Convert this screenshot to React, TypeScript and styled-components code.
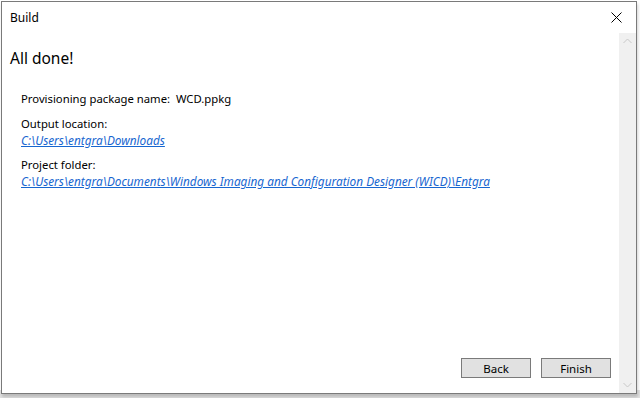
import React from "react";
import styled, { createGlobalStyle } from "styled-components";

const Global = createGlobalStyle`
  html, body {
    margin: 0;
    padding: 0;
    background: #ffffff;
  }
  body {
    font-family: "Noto Sans", "Open Sans", sans-serif;
    color: #000;
  }
`;

const Page = styled.div`
  width: 640px;
  height: 398px;
  padding: 1px 4px 4px 1px;
  box-sizing: border-box;
  background: linear-gradient(#fff 0 390px, #e2e2e2 390px);
`;

const Win = styled.div`
  width: 636px;
  height: 393px;
  box-sizing: border-box;
  border: 1px solid #7a7a7a;
  background: #fff;
  display: flex;
  flex-direction: column;
  box-shadow: 1px 3px 3px rgba(0,0,0,0.18);
`;

const TitleBar = styled.div`
  height: 31px;
  display: flex;
  align-items: center;
  justify-content: space-between;
  padding: 0 0 1px 8px;
  box-sizing: border-box;
  font-size: 12px;
  flex-shrink: 0;
`;

const CloseBtn = styled.div`
  width: 40px;
  height: 30px;
  display: flex;
  align-items: center;
  justify-content: center;
`;

const Body = styled.div`
  flex: 1;
  display: flex;
  min-height: 0;
`;

const Content = styled.div`
  flex: 1;
  display: flex;
  flex-direction: column;
  padding: 14px 8px 15px 8px;
`;

const Heading = styled.h1`
  margin: 0 0 22px 0;
  font-size: 15.5px;
  font-weight: 400;
  line-height: 22px;
`;

const Info = styled.div`
  padding-left: 11px;
  display: flex;
  flex-direction: column;
  gap: 9px;
  font-size: 11.3px;
  line-height: 16px;
`;

const Field = styled.div`
  display: flex;
  flex-direction: column;
`;

const Link = styled.a`
  color: #1766d0;
  font-style: italic;
  font-size: 11.8px;
  text-decoration: underline;
  cursor: pointer;
`;

const Spacer = styled.div`
  flex: 1;
`;

const Buttons = styled.div`
  display: flex;
  justify-content: flex-end;
  gap: 10px;
  padding-right: 0;
`;

const Button = styled.button`
  width: 70px;
  height: 20px;
  box-sizing: border-box;
  border: 1px solid #7a7a7a;
  background: #e1e1e1;
  font-family: "Noto Sans", "Open Sans", sans-serif;
  font-size: 11.5px;
  padding: 0;
  color: #000;
`;

const ScrollBar = styled.div`
  width: 17px;
  background: #f0f0f0;
  display: flex;
  flex-direction: column;
  justify-content: space-between;
  align-items: center;
  padding: 5px 0;
`;

const Chevron = ({ up }: { up?: boolean }) => (
  <svg width="9" height="6" viewBox="0 0 9 6">
    <path
      d={up ? "M0.5 5 L4.5 1 L8.5 5" : "M0.5 1 L4.5 5 L8.5 1"}
      fill="none"
      stroke="#c8c8c8"
      strokeWidth="1"
    />
  </svg>
);

export default function App() {
  return (
    <>
      <Global />
      <Page>
        <Win>
          <TitleBar>
            <span>Build</span>
            <CloseBtn>
              <svg width="11" height="11" viewBox="0 0 11 11">
                <path d="M0.5 0.5 L10.5 10.5 M10.5 0.5 L0.5 10.5" stroke="#000" strokeWidth="1" />
              </svg>
            </CloseBtn>
          </TitleBar>
          <Body>
            <Content>
              <Heading>All done!</Heading>
              <Info>
                <div>Provisioning package name:&nbsp; WCD.ppkg</div>
                <Field>
                  <span>Output location:</span>
                  <Link>C:\Users\entgra\Downloads</Link>
                </Field>
                <Field>
                  <span>Project folder:</span>
                  <Link>C:\Users\entgra\Documents\Windows Imaging and Configuration Designer (WICD)\Entgra</Link>
                </Field>
              </Info>
              <Spacer />
              <Buttons>
                <Button>Back</Button>
                <Button>Finish</Button>
              </Buttons>
            </Content>
            <ScrollBar>
              <Chevron up />
              <Chevron />
            </ScrollBar>
          </Body>
        </Win>
      </Page>
    </>
  );
}
